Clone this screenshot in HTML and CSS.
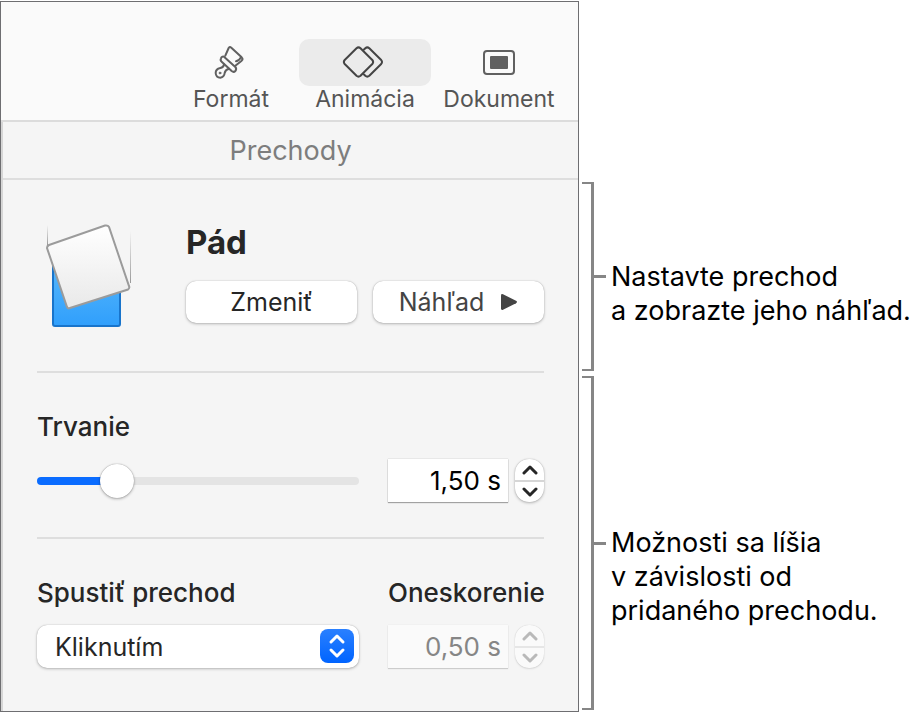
FILE: index.html
```html
<!DOCTYPE html>
<html lang="sk">
<head>
    <meta charset="UTF-8">
    <meta name="viewport" content="width=device-width, initial-scale=1.0">
    <title>Prechody</title>
    <link rel="stylesheet" href="styles.css">
</head>
<body>
    <div class="figure">
        <main class="panel">
            <nav class="toolbar">
                <button class="tab" type="button">
                    <span class="tab-icon">
                        <svg width="40" height="36" viewBox="92 44 120 108" fill="none" stroke="#606060" stroke-width="6" stroke-linejoin="round" stroke-linecap="round">
                            <path d="M135 76 145 53Q148 48 153 52L184 81Q189 86 184 91L165 106"/>
                            <path d="M167 93Q177 91 181 82"/>
                            <path d="M131 79Q124 77 122 84Q119 90 124 94L154 122Q160 127 165 122Q170 116 165 110Z"/>
                            <path d="M131 102Q130 111 120 113Q106 116 106 128Q107 142 120 142Q132 140 133 128Q135 118 146 115"/>
                            <circle cx="119" cy="128" r="3" fill="#606060" stroke-width="2"/>
                        </svg>
                    </span>
                    <span class="tab-label">Formát</span>
                </button>
                <button class="tab active" type="button">
                    <span class="tab-icon">
                        <svg width="46" height="34" viewBox="0 1 46 34" fill="none" stroke="#444" stroke-width="2" stroke-linejoin="round" stroke-linecap="round">
                            <path d="M14.5 3.2Q16.5 1.5 18.5 3.2L30.3 15Q32 17 30.3 19L18.5 30.8Q16.5 32.5 14.5 30.8L2.7 19Q1 17 2.7 15Z"/>
                            <path d="M22 4.5 23.3 3.2Q25.3 1.5 27.3 3.2L39.2 15Q40.8 17 39.2 19L27.3 30.8Q25.3 32.5 23.3 30.8L22 29.5"/>
                        </svg>
                    </span>
                    <span class="tab-label">Animácia</span>
                </button>
                <button class="tab" type="button">
                    <span class="tab-icon">
                        <svg width="32" height="26" viewBox="0 0 32 26" fill="none">
                            <rect x="1" y="1" width="30" height="23" rx="3" stroke="#606060" stroke-width="2"/>
                            <rect x="7" y="6" width="18" height="13" rx="1" fill="#606060"/>
                        </svg>
                    </span>
                    <span class="tab-label">Dokument</span>
                </button>
            </nav>

            <div class="inspector">
                <h1 class="heading">Prechody</h1>

                <section class="section effect">
                    <svg class="thumb" width="88" height="106" viewBox="0 0 88 106">
                        <defs>
                            <linearGradient id="paper" x1="0" y1="0" x2="0" y2="1">
                                <stop offset="0" stop-color="#fff"/>
                                <stop offset="1" stop-color="#e9e9e9"/>
                            </linearGradient>
                            <linearGradient id="blue" x1="0" y1="0" x2="0" y2="1">
                                <stop offset="0" stop-color="#58b8fb"/>
                                <stop offset="1" stop-color="#309ffc"/>
                            </linearGradient>
                            <linearGradient id="trail" x1="0" y1="0" x2="0" y2="1">
                                <stop offset="0" stop-color="#999" stop-opacity="0"/>
                                <stop offset="1" stop-color="#999"/>
                            </linearGradient>
                        </defs>
                        <rect x="2" y="2" width="1" height="20" fill="url(#trail)"/>
                        <rect x="85" y="8" width="1" height="52" fill="url(#trail)"/>
                        <path d="M8 38H75V101Q75 103 73 103H10Q8 103 8 101Z" fill="url(#blue)" stroke="#1874cb" stroke-width="2"/>
                        <path d="M4 22 60 2.5Q63 2 64 4L84 63Q85 65 83 66.5L25 85Q23 86 22 84L2 25Q2 23 4 22Z" fill="url(#paper)" stroke="#9b9b9b" stroke-width="2"/>
                    </svg>
                    <div class="effect-info">
                        <h2 class="effect-name">Pád</h2>
                        <div class="effect-buttons">
                            <button class="button" type="button">Zmeniť</button>
                            <button class="button preview" type="button">
                                Náhľad
                                <svg width="18" height="18" viewBox="0 0 18 18"><path d="M1 2.5Q1 .5 3 1.2L16 7.8Q18 9 16 10.2L3 16.8Q1 17.5 1 15.5Z" fill="#444"/></svg>
                            </button>
                        </div>
                    </div>
                </section>

                <section class="section">
                    <label class="label" for="duration">Trvanie</label>
                    <div class="row">
                        <input class="slider" id="duration" type="range" min="0" max="100" value="22">
                        <input class="field" type="text" value="1,50 s" aria-label="Trvanie v sekundách">
                        <div class="stepper">
                            <button type="button" aria-label="Zvýšiť trvanie">
                                <svg width="16" height="10" viewBox="0 0 16 10"><path d="M2 8 8 2l6 6"/></svg>
                            </button>
                            <button type="button" aria-label="Znížiť trvanie">
                                <svg width="16" height="10" viewBox="0 0 16 10"><path d="M2 2l6 6 6-6"/></svg>
                            </button>
                        </div>
                    </div>
                </section>

                <section class="section start">
                    <div class="row">
                        <label class="label" for="start">Spustiť prechod</label>
                        <label class="label delay-label" for="delay">Oneskorenie</label>
                    </div>
                    <div class="row">
                        <div class="popup">
                            <select id="start">
                                <option>Kliknutím</option>
                            </select>
                            <span class="popup-arrows">
                                <svg width="18" height="26" viewBox="0 0 18 26"><path d="M3 9l6-6 6 6M3 17l6 6 6-6"/></svg>
                            </span>
                        </div>
                        <input class="field" id="delay" type="text" value="0,50 s" disabled>
                        <div class="stepper disabled">
                            <button type="button" aria-label="Zvýšiť oneskorenie" disabled>
                                <svg width="16" height="10" viewBox="0 0 16 10"><path d="M2 8 8 2l6 6"/></svg>
                            </button>
                            <button type="button" aria-label="Znížiť oneskorenie" disabled>
                                <svg width="16" height="10" viewBox="0 0 16 10"><path d="M2 2l6 6 6-6"/></svg>
                            </button>
                        </div>
                    </div>
                </section>
            </div>
        </main>

        <aside class="callouts">
            <div class="callout">
                <span class="bracket"></span>
                <span class="tick"></span>
                <p>Nastavte prechod<br>a zobrazte jeho náhľad.</p>
            </div>
            <div class="callout callout-options">
                <span class="bracket"></span>
                <span class="tick"></span>
                <p>Možnosti sa líšia<br>v závislosti od<br>pridaného prechodu.</p>
            </div>
        </aside>
    </div>
</body>
</html>
```

FILE: styles.css
```css
* {
    box-sizing: border-box;
}

body {
    margin: 0;
    background-color: #fff;
    font-family: Inter, "Liberation Sans", sans-serif;
    color: #262626;
}

button,
input,
select {
    font: inherit;
    color: inherit;
    margin: 0;
    padding: 0;
    border: none;
}

.figure {
    display: flex;
    padding-top: 1px;
}

.panel {
    flex: 1;
    min-width: 0;
    border: 1px solid #6e6e71;
    background-color: #f5f5f5;
}

/* Toolbar */
.toolbar {
    display: flex;
    justify-content: flex-end;
    gap: 2px;
    padding: 37px 13px 8px;
    background-color: #fafafa;
    border-bottom: 2px solid #dcdcdc;
}

.tab {
    width: 132px;
    background: none;
    color: #555;
    font-size: 23px;
    line-height: 26px;
}

.tab-icon {
    display: flex;
    justify-content: center;
    align-items: center;
    height: 47px;
    border-radius: 10px;
}

.tab.active .tab-icon {
    background-color: #ebebeb;
}

.tab-label {
    display: block;
}

/* Inspector */
.inspector {
    border-left: 2px solid #d6d6d6;
}

.heading {
    margin: 0;
    padding: 13px 0 11px;
    border-bottom: 2px solid #dedede;
    color: #7d7d7d;
    font-size: 27px;
    font-weight: 400;
    line-height: 32px;
    text-align: center;
}

.section {
    margin: 0 34px;
    padding: 38px 0 35px;
}

.section + .section {
    border-top: 2px solid #dedede;
}

.effect {
    display: flex;
    padding: 43px 0 42px;
}

.start {
    padding-bottom: 43px;
}

.thumb {
    flex: none;
    margin-left: 8px;
    margin-right: 53px;
}

.effect-info {
    flex: 1;
}

.effect-name {
    margin: 0 0 20px;
    font-size: 33px;
    font-weight: 700;
    line-height: 38px;
}

.effect-buttons {
    display: flex;
    gap: 16px;
}

.button {
    flex: 1;
    height: 42px;
    border-radius: 10px;
    background-color: #fff;
    box-shadow: 0 0 1px rgba(0, 0, 0, 0.3), 0 1px 3px rgba(0, 0, 0, 0.25);
    font-size: 25px;
}

.preview {
    display: flex;
    justify-content: center;
    align-items: center;
    gap: 16px;
    color: #444;
}

.label {
    display: block;
    flex: 1;
    margin-bottom: 16px;
    font-size: 26px;
    font-weight: 500;
    line-height: 32px;
}

.delay-label {
    flex: none;
    width: 156px;
    white-space: nowrap;
}

.row {
    display: flex;
    align-items: center;
}

.slider {
    flex: 1;
    min-width: 0;
    height: 34px;
    appearance: none;
    background: none;
}

.slider::-webkit-slider-runnable-track {
    height: 8px;
    border-radius: 4px;
    background: linear-gradient(to right, #0a6cff 25%, #e4e4e4 25%);
}

.slider::-webkit-slider-thumb {
    appearance: none;
    width: 34px;
    height: 34px;
    margin-top: -13px;
    border-radius: 50%;
    background-color: #fff;
    box-shadow: 0 0 1px rgba(0, 0, 0, 0.4), 0 1px 3px rgba(0, 0, 0, 0.3);
}

.field {
    width: 120px;
    height: 43px;
    margin-left: 29px;
    margin-right: 7px;
    padding-right: 7px;
    background-color: #fff;
    box-shadow: 0 0 1px rgba(0, 0, 0, 0.3), 0 1px 1px rgba(0, 0, 0, 0.3);
    color: #000;
    font-size: 26px;
    text-align: right;
}

.field:disabled {
    background-color: #fafafa;
    box-shadow: 0 0 1px rgba(0, 0, 0, 0.1), 0 1px 1px rgba(0, 0, 0, 0.15);
    color: #868686;
}

.stepper {
    width: 29px;
    border-radius: 14px;
    background-color: #fff;
    box-shadow: 0 0 1px rgba(0, 0, 0, 0.3), 0 1px 3px rgba(0, 0, 0, 0.25);
}

.stepper button {
    display: flex;
    justify-content: center;
    align-items: center;
    width: 100%;
    height: 21px;
    background: none;
}

.stepper button + button {
    height: 22px;
    border-top: 2px solid #d6d6d6;
}

.stepper path {
    fill: none;
    stroke: #262626;
    stroke-width: 3;
    stroke-linecap: round;
    stroke-linejoin: round;
}

.stepper.disabled {
    background-color: #fafafa;
    box-shadow: 0 0 1px rgba(0, 0, 0, 0.2), 0 1px 2px rgba(0, 0, 0, 0.1);
}

.stepper.disabled button + button {
    border-color: #e6e6e6;
}

.stepper.disabled path {
    stroke: #b9b9b9;
}

.popup {
    position: relative;
    flex: 1;
}

.popup select {
    display: block;
    width: 100%;
    height: 43px;
    padding: 0 44px 0 18px;
    appearance: none;
    border-radius: 10px;
    background-color: #fff;
    box-shadow: 0 0 1px rgba(0, 0, 0, 0.3), 0 1px 3px rgba(0, 0, 0, 0.25);
    font-size: 25px;
}

.popup-arrows {
    position: absolute;
    top: 4px;
    right: 5px;
    display: flex;
    justify-content: center;
    align-items: center;
    width: 34px;
    height: 34px;
    border-radius: 8px;
    background: linear-gradient(#2a80ff, #0064ff);
    pointer-events: none;
}

.popup-arrows path {
    fill: none;
    stroke: #fff;
    stroke-width: 3;
    stroke-linecap: round;
    stroke-linejoin: round;
}

/* Callouts */
.callouts {
    flex: none;
    display: flex;
    flex-direction: column;
    gap: 5px;
    width: 339px;
    padding: 181px 0 2px 3px;
}

.callout {
    display: flex;
    align-items: center;
    height: 189px;
}

.callout-options {
    flex: 1;
}

.callout p {
    height: 34px;
    margin: 0 0 0 5px;
    color: #000;
    font-size: 27px;
    line-height: 34px;
    white-space: nowrap;
}

.bracket {
    align-self: stretch;
    width: 12px;
    border: 3px solid #868686;
    border-width: 2px 3px 2px 0;
}

.tick {
    width: 12px;
    height: 3px;
    background-color: #868686;
}
```
